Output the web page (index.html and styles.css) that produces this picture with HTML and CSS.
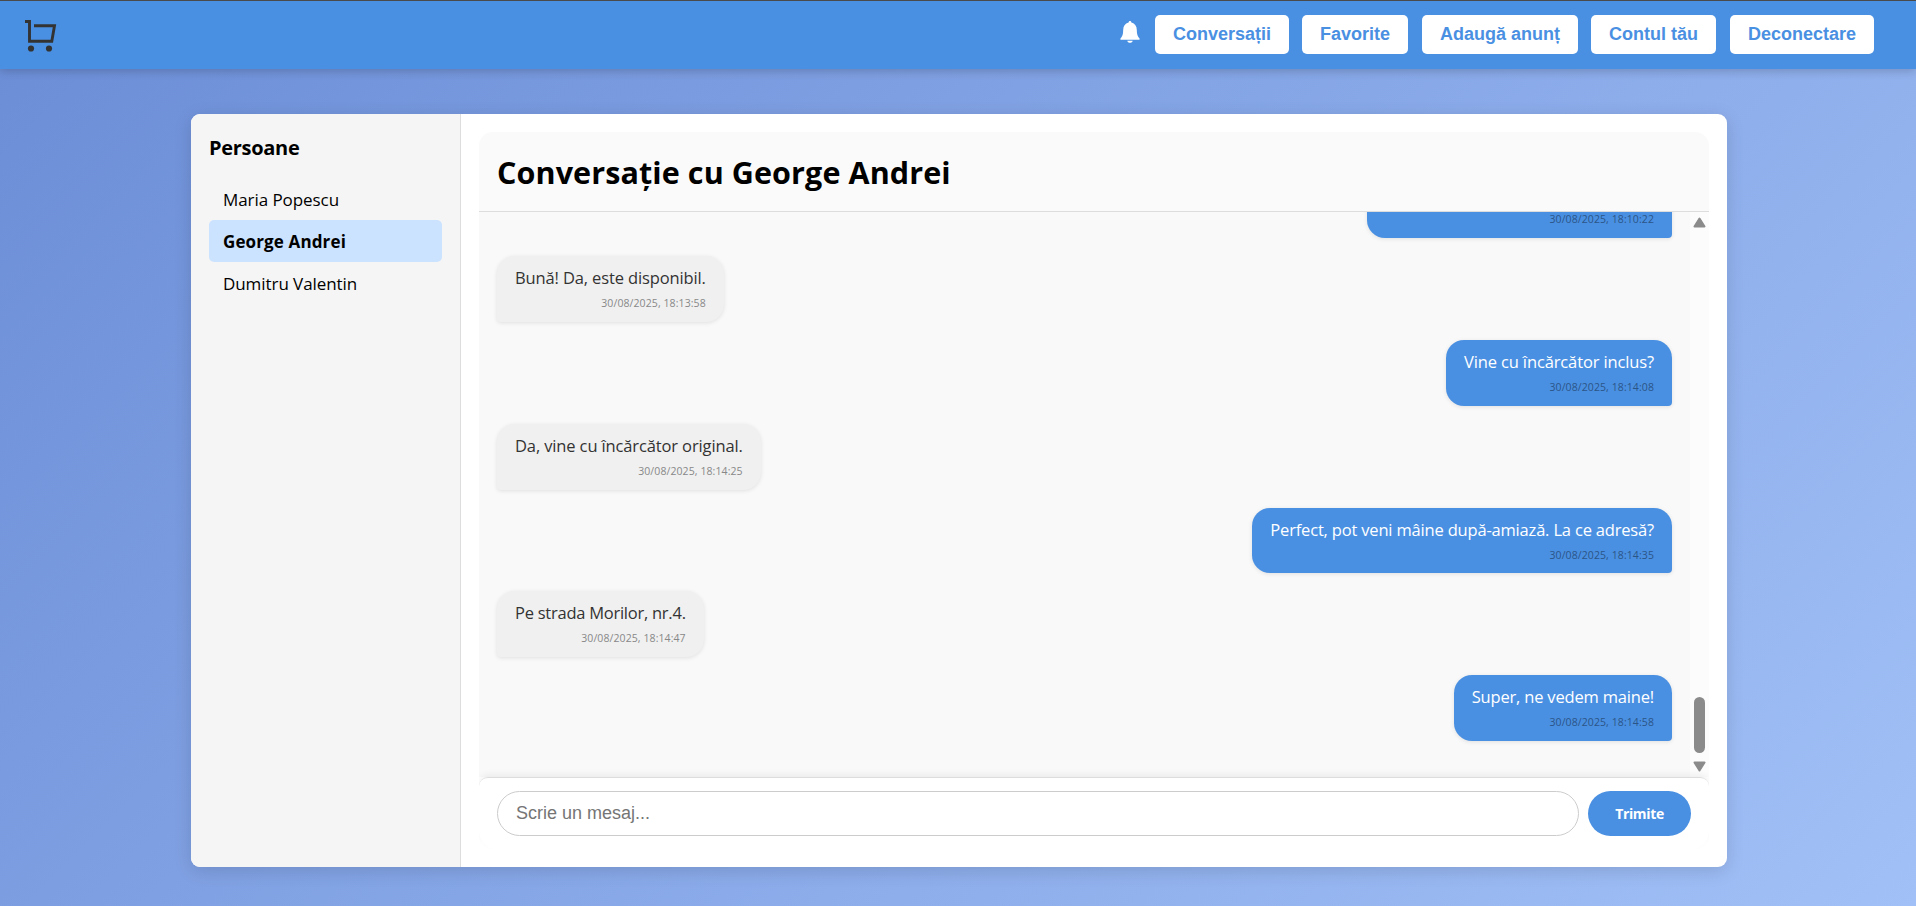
FILE: index.html
```html
<!DOCTYPE html>
<html lang="ro">
<head>
<meta charset="utf-8">
<title>Conversații</title>
<link rel="stylesheet" href="styles.css">
</head>
<body>
<header class="navbar">
  <svg class="logo" viewBox="0 0 34 34" width="34" height="34">
    <path d="M1 2.500h4.500V22.300h22.300L30.500 6.800H10" fill="none" stroke="#333" stroke-width="2.900"/>
    <circle cx="7" cy="29.500" r="3.100" fill="#333"/><circle cx="25" cy="29.500" r="3.100" fill="#333"/>
  </svg>
  <nav class="nav-links">
    <svg class="bell" viewBox="0 0 20 22" width="20" height="22">
      <path d="M10 0c.9 0 1.300.6 1.400 1.500C15 2.500 16.800 5.200 16.800 9c0 4.500 1 6.800 2.700 8.500.4.600.1 1.300-.6 1.300H1.100c-.7 0-1-.7-.6-1.300C2.200 15.800 3.200 13.500 3.200 9c0-3.800 1.800-6.500 5.400-7.500C8.700.6 9.100 0 10 0zM7.300 19.700h5.400c-.3 1.400-1.300 2-2.700 2s-2.400-.6-2.700-2z" fill="#fff"/>
    </svg>
    <button class="nav-btn conv">Conversații</button>
    <button class="nav-btn fav">Favorite</button>
    <button class="nav-btn add">Adaugă anunț</button>
    <button class="nav-btn account">Contul tău</button>
    <button class="nav-btn logout">Deconectare</button>
  </nav>
</header>
<main class="panel">
  <aside class="people">
    <h3 class="people-title">Persoane</h3>
    <ul class="people-list">
      <li class="person">Maria Popescu</li>
      <li class="person active">George Andrei</li>
      <li class="person">Dumitru Valentin</li>
    </ul>
  </aside>
  <section class="chat">
    <div class="chat-header"><h2 class="chat-title">Conversație cu George Andrei</h2></div>
    <div class="chat-body">
      <div class="messages">
        <div class="bubble sent first"><time class="time">30/08/2025, 18:10:22</time></div>
        <div class="bubble received"><p class="text">Bună! Da, este disponibil.</p><time class="time">30/08/2025, 18:13:58</time></div>
        <div class="bubble sent"><p class="text">Vine cu încărcător inclus?</p><time class="time">30/08/2025, 18:14:08</time></div>
        <div class="bubble received"><p class="text">Da, vine cu încărcător original.</p><time class="time">30/08/2025, 18:14:25</time></div>
        <div class="bubble sent"><p class="text snug">Perfect, pot veni mâine după-amiază. La ce adresă?</p><time class="time">30/08/2025, 18:14:35</time></div>
        <div class="bubble received"><p class="text tight">Pe strada Morilor, nr.4.</p><time class="time">30/08/2025, 18:14:47</time></div>
        <div class="bubble sent"><p class="text snug">Super, ne vedem maine!</p><time class="time">30/08/2025, 18:14:58</time></div>
      </div>
      <div class="scrollbar">
        <svg viewBox="0 0 13 11" width="13" height="11"><path d="M6.500 1.500L11.500 9.500H1.500z" fill="#8b8b8b" stroke="#8b8b8b" stroke-width="2" stroke-linejoin="round"/></svg>
        <div class="thumb"></div>
        <svg viewBox="0 0 13 11" width="13" height="11"><path d="M6.500 9.500L11.500 1.500H1.500z" fill="#8b8b8b" stroke="#8b8b8b" stroke-width="2" stroke-linejoin="round"/></svg>
      </div>
    </div>
    <form class="composer">
      <input class="message-input" type="text" placeholder="Scrie un mesaj...">
      <button class="send" type="button">Trimite</button>
    </form>
  </section>
</main>
</body>
</html>
```
FILE: styles.css
```css
* { box-sizing: border-box; }
body {
  margin: 0;
  height: 906px;
  overflow: hidden;
  font-family: "Open Sans", "Noto Sans", sans-serif;
  background: linear-gradient(135deg, #6b8dd6, #a1c0f7);
}
.navbar {
  height: 69px;
  padding: 0 42px 0 24px;
  display: flex;
  align-items: center;
  justify-content: space-between;
  background: #4a90e2;
  border-top: 1px solid #4a4a4a;
  box-shadow: 0 2px 9px rgba(0, 0, 0, .2);
}
.logo { margin-top: 1px; }
.nav-links { display: flex; align-items: center; margin-top: -1px; }
.bell { margin: -5px 15px 0 0; }
.nav-btn {
  height: 39px;
  padding: 0;
  border: 0;
  border-radius: 5px;
  background: #fff;
  color: #4a90e2;
  font: bold 18px "Liberation Sans", sans-serif;
}
.conv { width: 134px; margin-right: 13px; }
.fav { width: 106px; margin-right: 14px; }
.add { width: 156px; margin-right: 13px; }
.account { width: 125px; margin-right: 14px; }
.logout { width: 144px; }
.panel {
  width: 1536px;
  height: 753px;
  margin: 45px 0 0 191px;
  display: flex;
  overflow: hidden;
  border-radius: 9px;
  background: #fff;
  box-shadow: 0 4px 18px rgba(0, 0, 0, .13);
}
.people {
  width: 270px;
  padding: 18px;
  background: #f5f5f5;
  border-right: 1px solid #ddd;
}
.people-title { margin: 0 0 15px; font-size: 20px; line-height: 31px; letter-spacing: -.3px; }
.people-list { margin: 0; padding: 0; list-style: none; }
.person {
  height: 42px;
  padding: 0 14px;
  line-height: 43px;
  font-size: 17px;
  letter-spacing: -.07px;
  border-radius: 5px;
}
.active { background: #cce3ff; font-weight: bold; letter-spacing: .13px; }
.chat { flex: 1; padding: 18px; display: flex; flex-direction: column; }
.chat-header {
  height: 80px;
  padding: 19px 18px 0;
  background: #fafafa;
  border-bottom: 1px solid #ddd;
  border-radius: 14px 14px 0 0;
}
.chat-title { margin: 0; font-size: 30.500px; line-height: 43px; letter-spacing: .1px; }
.chat-body { height: 565px; display: flex; background: #f9f9f9; }
.messages {
  flex: 1;
  padding: 0 18px 36px;
  display: flex;
  flex-direction: column;
  justify-content: flex-end;
  gap: 18px;
  overflow: hidden;
}
.bubble {
  flex: none;
  height: 65.800px;
  padding: 8px 18px 0;
  border-radius: 18px;
  box-shadow: 0 1px 4px rgba(0, 0, 0, .1);
}
.sent { align-self: flex-end; background: #4a90e2; color: #fff; border-bottom-right-radius: 4px; }
.received { align-self: flex-start; background: #f0f0f0; color: #333; border-bottom-left-radius: 4px; }
.first { width: 305px; padding-top: 35px; }
.text { margin: 0; font-size: 16.500px; line-height: 27px; letter-spacing: -.13px; white-space: nowrap; }
.snug { letter-spacing: -.18px; }
.tight { letter-spacing: -.25px; }
.time {
  display: block;
  margin-top: 4px;
  font-size: 10.500px;
  line-height: 16px;
  letter-spacing: .09px;
  text-align: right;
  color: #888;
}
.sent .time { color: #2b5587; }
.scrollbar {
  width: 19px;
  padding: 5px 0;
  display: flex;
  flex-direction: column;
  align-items: center;
  background: #fcfcfc;
}
.thumb { width: 11px; height: 56px; margin: auto 0 8px; border-radius: 6px; background: #8b8b8b; }
.composer {
  height: 72px;
  padding: 13px 18px 0;
  display: flex;
  gap: 9px;
  background: #fff;
  border-top: 1px solid #ddd;
  border-radius: 9px 9px 18px 18px;
  box-shadow: 0 -3px 6px rgba(0, 0, 0, .05);
  clip-path: inset(-9px 0 0 0);
}
.message-input {
  flex: 1;
  height: 45px;
  padding: 0 18px;
  border: 1px solid #ccc;
  border-radius: 23px;
  font: 18px "Liberation Sans", sans-serif;
}
.message-input::placeholder { color: #757575; }
.send {
  width: 103px;
  height: 45px;
  border: 0;
  border-radius: 23px;
  background: #4a90e2;
  color: #fff;
  font: bold 14px "Open Sans", sans-serif;
  letter-spacing: -.35px;
}
```
